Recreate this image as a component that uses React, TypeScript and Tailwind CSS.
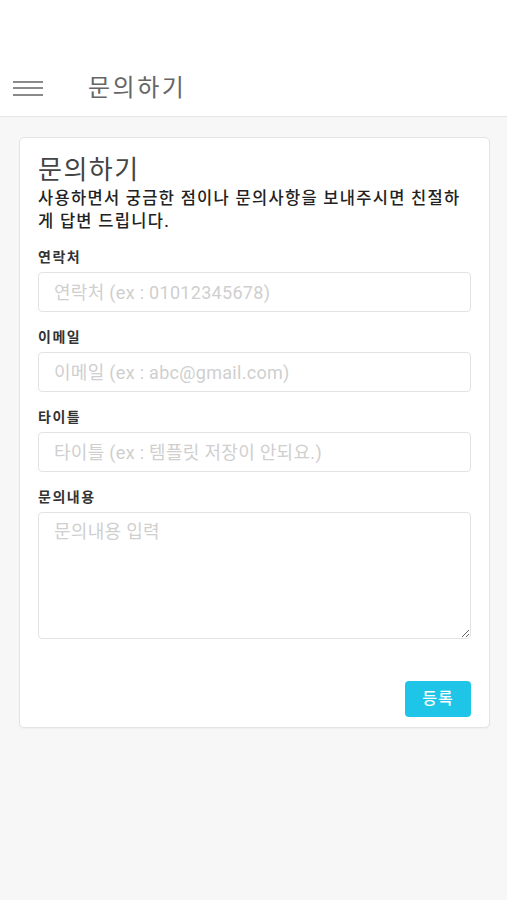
import { useState } from "react";

const font = { fontFamily: 'Roboto, "Noto Sans CJK KR", "Noto Sans", sans-serif' };

const Field = ({
  label,
  placeholder,
  multiline,
}: {
  label: string;
  placeholder: string;
  multiline?: boolean;
}) => (
  <div className="flex flex-col">
    <label className="mb-[5px] text-[14px] leading-[20px] font-bold tracking-[1.5px] text-[#333]">{label}</label>
    {multiline ? (
      <textarea
        placeholder={placeholder}
        className="h-[127px] w-full resize-y rounded-[4px] border border-[#e3e3e3] bg-white px-[15px] py-[7px] text-[18px] leading-[24px] tracking-[0.3px] text-[#333] placeholder:text-[#cfcfcf] outline-none"
      />
    ) : (
      <input
        placeholder={placeholder}
        className="h-[40px] w-full rounded-[4px] border border-[#e3e3e3] bg-white px-[15px] text-[18px] tracking-[0.3px] text-[#333] placeholder:text-[#cfcfcf] outline-none"
      />
    )}
  </div>
);

export default function App() {
  const [sent, setSent] = useState(false);

  return (
    <div className="min-h-[900px] w-full bg-[#f7f7f7]" style={font}>
      <header className="bg-white pt-[60px]">
        <div className="flex h-[57px] items-center border-b border-[#e6e6e6]">
          <button className="ml-[13px] flex w-[30px] flex-col gap-[4.5px]">
            <span className="h-[2px] w-full bg-[#8a8a8a]" />
            <span className="h-[2px] w-full bg-[#8a8a8a]" />
            <span className="h-[2px] w-full bg-[#8a8a8a]" />
          </button>
          <h1 className="ml-[45px] text-[24px] leading-none tracking-[2.5px] text-[#666]">문의하기</h1>
        </div>
      </header>

      <main className="pt-[20px] pr-[17px] pl-[19px]">
        <div className="rounded-[5px] border border-[#e4e4e4] bg-white px-[18px] pt-[15px] pb-[10px] shadow-[0_1px_2px_rgba(0,0,0,0.04)]">
          <h2 className="text-[26px] leading-[34px] tracking-[1.5px] text-[#444]">문의하기</h2>
          <p className="text-[16.5px] leading-[23px] font-medium tracking-[1.3px] text-[#222]">
            사용하면서 궁금한 점이나 문의사항을 보내주시면 친절하게 답변 드립니다.
          </p>

          <div className="mt-[14px] flex flex-col gap-[15px]">
            <Field label="연락처" placeholder="연락처 (ex : 01012345678)" />
            <Field label="이메일" placeholder="이메일 (ex : abc@gmail.com)" />
            <Field label="타이틀" placeholder="타이틀 (ex : 템플릿 저장이 안되요.)" />
            <Field label="문의내용" placeholder="문의내용 입력" multiline />
          </div>

          <div className="mt-[42px] flex justify-end">
            <button
              onClick={() => setSent(true)}
              className="h-[36px] w-[66px] rounded-[4px] bg-[#1fc5e6] text-[16px] font-medium tracking-[1px] text-white"
            >
              {sent ? "완료" : "등록"}
            </button>
          </div>
        </div>
      </main>
    </div>
  );
}
